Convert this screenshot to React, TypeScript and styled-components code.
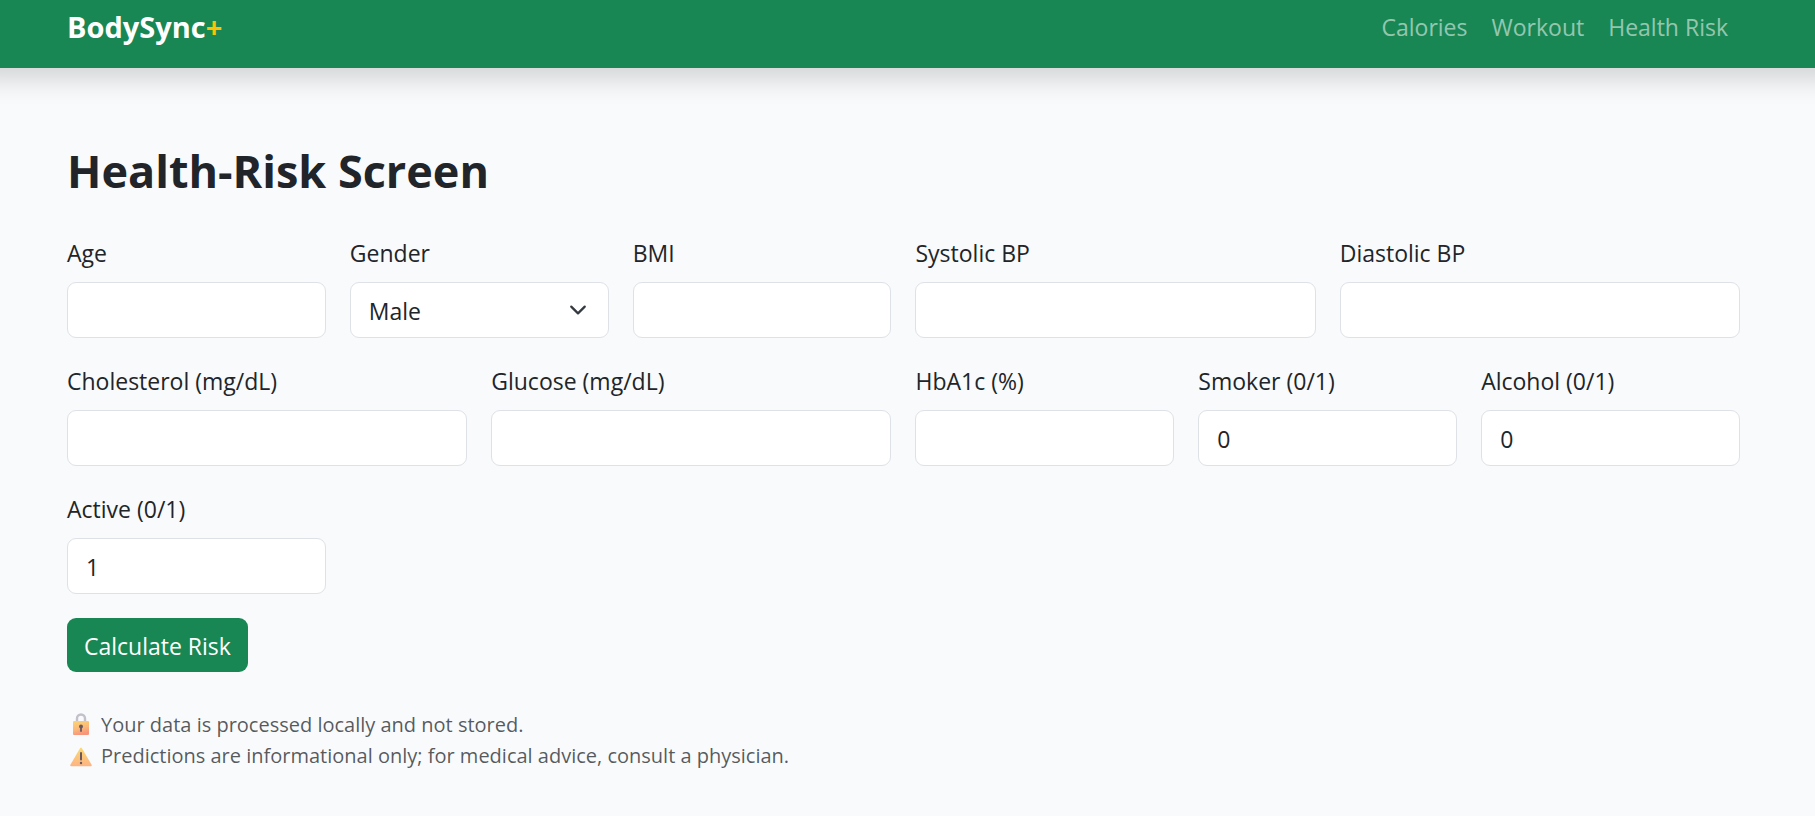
import React from "react";
import styled, { createGlobalStyle } from "styled-components";

const GlobalStyle = createGlobalStyle`
  *, *::before, *::after { box-sizing: border-box; }
  body {
    margin: 0;
    min-height: 100vh;
    background: #f8fafc;
    color: #212529;
    font-family: "Open Sans", "Noto Sans", sans-serif;
    font-size: 23px;
    line-height: 36px;
  }
`;

const Header = styled.header`
  display: flex;
  align-items: center;
  justify-content: space-between;
  flex-wrap: wrap;
  padding: 5px 75px 19px 67px;
  background: #198754;
  box-shadow: 0 -12px 24px 24px rgba(0, 0, 0, 0.15);
  line-height: 44px;
`;

const Brand = styled.a`
  color: #fff;
  font-size: 29px;
  font-weight: 700;
  text-decoration: none;
`;

const BrandAccent = styled.span`
  color: #ffc107;
`;

const Nav = styled.nav`
  display: flex;
`;

const NavLink = styled.a`
  padding: 0 12px;
  color: rgba(255, 255, 255, 0.55);
  text-decoration: none;
`;

const Main = styled.main`
  padding: 72px 75px 48px 67px;
`;

const Title = styled.h1`
  margin: 0 0 32px;
  font-size: 45px;
  font-weight: 700;
  line-height: 62px;
`;

const Form = styled.form`
  display: grid;
  grid-template-columns: repeat(12, minmax(0, 1fr));
  gap: 24px;
`;

const Field = styled.div<{ $span: number }>`
  grid-column: span ${(p) => p.$span};
`;

const Label = styled.label`
  display: block;
  margin-bottom: 10px;
  line-height: 38px;
  white-space: nowrap;
`;

const Input = styled.input`
  display: block;
  width: 100%;
  height: 56px;
  padding: 8px 18px 6px;
  border: 1px solid #dee2e6;
  border-radius: 9px;
  background: #fff;
  color: inherit;
  font: inherit;
`;

const SelectWrap = styled.div`
  display: grid;
  align-items: center;

  & > * {
    grid-area: 1 / 1;
  }
`;

const Select = styled(Input).attrs({ as: "select" })`
  appearance: none;
`;

const Chevron = styled.svg`
  justify-self: end;
  width: 18px;
  height: 18px;
  margin-right: 22px;
  pointer-events: none;
`;

const Submit = styled.button`
  grid-column: 1 / -1;
  justify-self: start;
  height: 54px;
  padding: 2px 17px 0;
  border: 0;
  border-radius: 9px;
  background: #198754;
  color: #fff;
  font: inherit;
`;

const Notes = styled.div`
  margin-top: 37px;
  color: rgba(33, 37, 41, 0.75);
  font-size: 20px;
  line-height: 31px;
`;

const Note = styled.p`
  display: flex;
  gap: 6px;
  margin: 0;
`;

const NoteIcon = styled.svg`
  flex: none;
  width: 28px;
  height: 31px;
`;

type FieldSpec = {
  id: string;
  label: string;
  span: number;
  value?: string;
  options?: string[];
};

const fields: FieldSpec[] = [
  { id: "age", label: "Age", span: 2 },
  { id: "gender", label: "Gender", span: 2, options: ["Male", "Female"] },
  { id: "bmi", label: "BMI", span: 2 },
  { id: "systolic", label: "Systolic BP", span: 3 },
  { id: "diastolic", label: "Diastolic BP", span: 3 },
  { id: "cholesterol", label: "Cholesterol (mg/dL)", span: 3 },
  { id: "glucose", label: "Glucose (mg/dL)", span: 3 },
  { id: "hba1c", label: "HbA1c (%)", span: 2 },
  { id: "smoker", label: "Smoker (0/1)", span: 2, value: "0" },
  { id: "alcohol", label: "Alcohol (0/1)", span: 2, value: "0" },
  { id: "active", label: "Active (0/1)", span: 2, value: "1" },
];

function LockIcon() {
  return (
    <NoteIcon viewBox="0 0 28 31" aria-hidden="true">
      <defs>
        <linearGradient id="lock-body" x1="0" y1="0" x2="0.3" y2="1">
          <stop offset="0" stopColor="#fcd673" />
          <stop offset="0.6" stopColor="#fbb878" />
          <stop offset="1" stopColor="#f8967c" />
        </linearGradient>
      </defs>
      <path d="M10 13V9.5a4 4 0 0 1 8 0V13" fill="none" stroke="#c3bfcb" strokeWidth="2.4" />
      <rect x="6" y="12" width="16" height="14" rx="1" fill="url(#lock-body)" />
      <circle cx="14" cy="17.5" r="2" fill="#69585f" />
      <path d="M14 18v4" stroke="#69585f" strokeWidth="1.8" strokeLinecap="round" />
    </NoteIcon>
  );
}

function WarningIcon() {
  return (
    <NoteIcon viewBox="0 0 28 31" aria-hidden="true">
      <defs>
        <linearGradient id="warning-body" x1="0" y1="0" x2="0" y2="1">
          <stop offset="0" stopColor="#fdda72" />
          <stop offset="1" stopColor="#fcb384" />
        </linearGradient>
      </defs>
      <path
        d="M13.2 8q.8-1.2 1.6 0l9.8 16.800q.6 1.400-.8 1.400H4.200q-1.400 0-.8-1.400z"
        fill="url(#warning-body)"
      />
      <path d="M14 13v6.500" stroke="#69585f" strokeWidth="2" strokeLinecap="round" />
      <circle cx="14" cy="23" r="1.200" fill="#69585f" />
    </NoteIcon>
  );
}

function FormField({ id, label, span, value, options }: FieldSpec) {
  return (
    <Field $span={span}>
      <Label htmlFor={id}>{label}</Label>
      {options ? (
        <SelectWrap>
          <Select id={id} name={id}>
            {options.map((option) => (
              <option key={option}>{option}</option>
            ))}
          </Select>
          <Chevron viewBox="0 0 16 16" aria-hidden="true">
            <path
              d="m2 5 6 6 6-6"
              fill="none"
              stroke="#343a40"
              strokeWidth="2"
              strokeLinecap="round"
              strokeLinejoin="round"
            />
          </Chevron>
        </SelectWrap>
      ) : (
        <Input id={id} name={id} inputMode="decimal" defaultValue={value} />
      )}
    </Field>
  );
}

export default function App() {
  return (
    <>
      <GlobalStyle />
      <Header>
        <Brand href="#home">
          BodySync<BrandAccent>+</BrandAccent>
        </Brand>
        <Nav>
          <NavLink href="#calories">Calories</NavLink>
          <NavLink href="#workout">Workout</NavLink>
          <NavLink href="#health-risk">Health Risk</NavLink>
        </Nav>
      </Header>
      <Main>
        <Title>Health-Risk Screen</Title>
        <Form onSubmit={(event) => event.preventDefault()}>
          {fields.map((field) => (
            <FormField key={field.id} {...field} />
          ))}
          <Submit type="submit">Calculate Risk</Submit>
        </Form>
        <Notes>
          <Note>
            <LockIcon />
            Your data is processed locally and not stored.
          </Note>
          <Note>
            <WarningIcon />
            Predictions are informational only; for medical advice, consult a physician.
          </Note>
        </Notes>
      </Main>
    </>
  );
}
